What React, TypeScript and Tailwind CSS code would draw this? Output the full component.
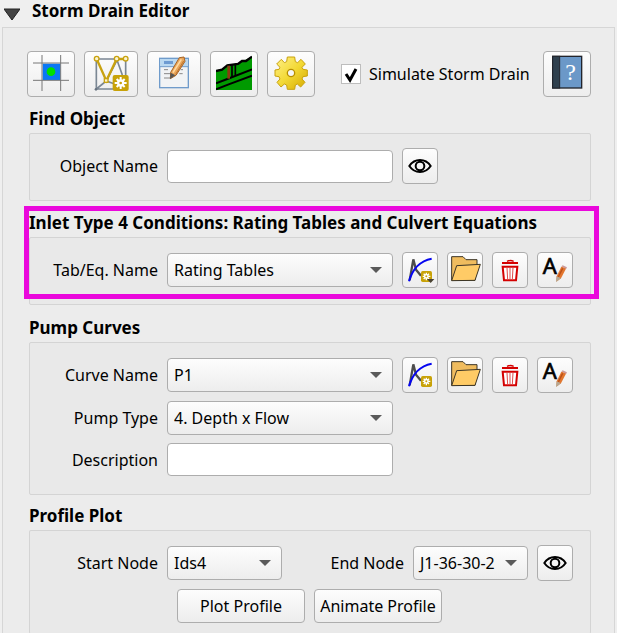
import type { ReactNode } from "react";

function GridPointIcon() {
  return (
    <svg className="h-9 w-9" viewBox="99 165 108 108" aria-hidden="true">
      <rect x="128" y="191" width="53" height="49" fill="#0a78f5" />
      <path d="M99 189H207M99 241H207M126 165V273M182 165V273" stroke="#777" strokeWidth="3" />
      <circle cx="153" cy="215" r="13" fill="#00e000" />
    </svg>
  );
}

function MeshIcon() {
  return (
    <svg className="h-9 w-9" viewBox="280 165 108 108" fill="none" aria-hidden="true">
      <path d="M290 177H378V230M290 177V267H345M290 267L320 243L352 180L368 225M290 180V267M320 243L345 252" stroke="#7b8794" strokeWidth="5" />
      <path d="M291 177L320 242L351 177H377" stroke="#c8a210" strokeWidth="7" />
      <g fill="#fbf3cf" stroke="#c8a210" strokeWidth="4">
        <circle cx="291" cy="176" r="7" />
        <circle cx="351" cy="176" r="7" />
        <circle cx="378" cy="176" r="7" />
        <rect x="314" y="236" width="11" height="11" />
      </g>
      <circle cx="289" cy="268" r="4" fill="#67727f" />
      <rect x="339" y="225" width="48" height="48" rx="6" fill="#c8a208" />
      <path d="M363 231V267M345 249H381M351 237L375 261M375 237L351 261" stroke="#fff" strokeWidth="6" />
      <circle cx="363" cy="249" r="11" fill="#fff" />
      <circle cx="363" cy="249" r="4" fill="#c8a208" />
    </svg>
  );
}

function FormPencilIcon() {
  return (
    <svg className="h-9 w-9" viewBox="468 165 108 108" fill="none" aria-hidden="true">
      <rect x="479" y="175" width="86" height="88" fill="#f1f3f5" stroke="#6f9bcb" strokeWidth="4" />
      <rect x="481" y="177" width="82" height="22" fill="#b9d8f1" />
      <path d="M480 200H565" stroke="#6f9bcb" strokeWidth="3" />
      <rect x="492" y="183" width="27" height="9" fill="#6d9bd2" />
      <path d="M492 209H504M492 221H514M492 234H512M542 209H549M538 221H548" stroke="#888" strokeWidth="3" />
      <path d="M538 173L552 171L555 184L528 226L511 236L512 217Z" fill="#e9a65b" stroke="#a96322" strokeWidth="3" />
      <path d="M544 178L519 218" stroke="#ffd9a0" strokeWidth="5" />
      <path d="M551 183L527 223" stroke="#bd7430" strokeWidth="3" />
      <path d="M512 218L526 226L510 237Z" fill="#555" />
    </svg>
  );
}

function ProfileIcon() {
  return (
    <svg className="h-9 w-9" viewBox="228 48 108 108" fill="none" aria-hidden="true">
      <path d="M228 94L248 90L266 77L296 73L320 61L336 52V153H228Z" fill="#009a00" />
      <path d="M228 96L246 92L262 79L294 75L306 66H318L336 53" stroke="#000" strokeWidth="7" />
      <path d="M228 133L262 120L336 91M228 151L266 136L336 110" stroke="#000" strokeWidth="6" />
      <path d="M276 78V116M286 76V110" stroke="#000" strokeWidth="5" />
      <path d="M266 80V119" stroke="#8d3a12" strokeWidth="8" />
    </svg>
  );
}

function GearIcon() {
  return (
    <svg className="h-9 w-9" viewBox="400 46 108 108" aria-hidden="true">
      <defs>
        <linearGradient id="gold" x1="0" y1="0" x2="1" y2="1">
          <stop offset="0" stopColor="#fff08a" />
          <stop offset="0.5" stopColor="#f3d935" />
          <stop offset="1" stopColor="#d5a900" />
        </linearGradient>
      </defs>
      <path
        d="M443 52H465L467 66L474 69L484 59L497 73L487 83L490 89L503 91V109L490 111L487 118L496 128L483 142L473 133L467 136L465 149H443L441 136L434 133L424 142L412 128L421 118L418 111L406 109V91L418 89L421 83L411 73L425 59L434 69L441 66Z"
        fill="url(#gold)"
        stroke="#c9a20c"
        strokeWidth="3"
        strokeLinejoin="round"
      />
      <circle cx="454" cy="100" r="11" fill="#f6f6f6" stroke="#b89000" strokeWidth="4" />
    </svg>
  );
}

function HelpBookIcon() {
  return (
    <svg className="h-9 w-9" viewBox="657 46 108 108" aria-hidden="true">
      <rect x="668" y="50" width="87" height="95" fill="#6b98c8" stroke="#22242c" strokeWidth="4" />
      <rect x="668" y="50" width="21" height="95" fill="#2f404e" stroke="#22242c" strokeWidth="3" />
      <text x="722" y="121" textAnchor="middle" fontSize="72" fill="#fff" fontFamily="'Liberation Serif', serif">?</text>
    </svg>
  );
}

function EyeIcon() {
  return (
    <svg className="h-6 w-6" viewBox="324 69 72 72" fill="none" stroke="#000" aria-hidden="true">
      <path d="M328 105C344 81 376 81 392 105C376 129 344 129 328 105Z" strokeWidth="6" />
      <circle cx="360" cy="105" r="13" strokeWidth="6" />
    </svg>
  );
}

function CurveIcon({ menu = false }: { menu?: boolean }) {
  return (
    <svg className="h-[30px] w-[30px] overflow-visible" viewBox="135 90 90 90" fill="none" aria-hidden="true">
      <path d="M149 166L160 103L168 134L183 152" stroke="#4c4c4c" strokeWidth="7" />
      <path d="M147 169C157 133 181 107 215 101" stroke="#0505f0" strokeWidth="6" />
      <rect x="183" y="138" width="33" height="33" rx="5" fill="#c8a208" />
      <path d="M199 143V166M188 154H211M191 146L207 162M207 146L191 162" stroke="#fff" strokeWidth="4" />
      <circle cx="199" cy="154" r="7" fill="#fff" />
      <circle cx="199" cy="154" r="3" fill="#c8a208" />
      {menu && <path d="M201 162H223L212 174Z" fill="#4a4334" />}
    </svg>
  );
}

function FolderIcon() {
  return (
    <svg className="h-[30px] w-[30px] overflow-visible" viewBox="270 90 90 90" strokeLinejoin="round" stroke="#3c3526" strokeWidth="3" aria-hidden="true">
      <path d="M275 166V95H309L318 104H351V121L345 166Z" fill="#f0bc5e" />
      <path d="M275 167L290 122L361 118L345 166Z" fill="#ffcb66" />
    </svg>
  );
}

function TrashIcon() {
  return (
    <svg className="h-[30px] w-[30px]" viewBox="405 90 90 90" fill="none" stroke="#d40000" aria-hidden="true">
      <path d="M441 109Q451 104 461 109" strokeWidth="4" />
      <path d="M426 114H474" strokeWidth="6" />
      <path d="M428 125H472L468 166H432Z" fill="#fff" strokeWidth="6" />
      <path d="M441 128L443 164M450 128V164M459 128L457 164" strokeWidth="3" stroke="#e04a4a" />
    </svg>
  );
}

function RenameIcon() {
  return (
    <svg className="h-[30px] w-[30px] overflow-visible" viewBox="540 90 90 90" aria-hidden="true">
      <text x="569" y="148" textAnchor="middle" fontSize="66" fill="#000" stroke="#000" strokeWidth="2" fontFamily="'Noto Sans', sans-serif">A</text>
      <path d="M590 154L604 125L619 129L603 160L589 170Z" fill="#e2762e" />
      <path d="M608 130L595 156" stroke="#b9501a" strokeWidth="4" />
      <path d="M604 124L608 121L621 127L618 132Z" fill="#c99" />
      <path d="M590 154L603 160L588 171Z" fill="#b5a894" />
    </svg>
  );
}

const face = "rounded border border-[#adadad] bg-linear-to-b from-[#fdfdfd] to-[#ededed]";

function ToolButton({ label, wide = false, children }: { label: string; wide?: boolean; children: ReactNode }) {
  return (
    <button type="button" aria-label={label} className={`flex h-[46px] shrink-0 items-center justify-center pb-0.5 ${wide ? "w-[54px]" : "w-12"} ${face}`}>
      {children}
    </button>
  );
}

function IconButton({ label, children }: { label: string; children: ReactNode }) {
  return (
    <button type="button" aria-label={label} className={`flex h-9 w-9 items-center justify-center ${face}`}>
      {children}
    </button>
  );
}

function Combo({ id, options }: { id: string; options: string[] }) {
  return (
    <div className="relative min-w-0">
      <select id={id} className={`block h-[34px] w-full appearance-none pr-8 pl-1 indent-0.5 leading-6 ${face}`}>
        {options.map((o) => (
          <option key={o}>{o}</option>
        ))}
      </select>
      <svg className="pointer-events-none absolute top-3.5 right-[11px] h-1.5 w-3" viewBox="0 0 12 6" aria-hidden="true">
        <path d="M0 0H12L6 6Z" fill="#5a5a5a" />
      </svg>
    </div>
  );
}

function TextBox({ id }: { id: string }) {
  return <input id={id} type="text" className="h-[33px] w-full min-w-0 rounded border border-[#adadad] bg-white px-1.5 leading-6" />;
}

function FieldLabel({ htmlFor, children }: { htmlFor: string; children: ReactNode }) {
  return (
    <label htmlFor={htmlFor} className="text-right whitespace-nowrap">
      {children}
    </label>
  );
}

const frame = "border border-[#d4d4d4] bg-[#e9e9e9] pr-[17px] rounded-xs";
const fields = "grid grid-cols-[128px_1fr_36px_36px_36px_36px] items-center gap-x-[9px]";

function Group({ title, highlighted = false, children }: { title: string; highlighted?: boolean; children: ReactNode }) {
  return (
    <section className="relative">
      <h2 className="h-[23px] text-[17px] font-bold whitespace-nowrap">{title}</h2>
      {children}
      {highlighted && <div className="pointer-events-none absolute -top-2 -right-2 bottom-1.5 -left-[5px] border-5 border-[#ea08dc]" />}
    </section>
  );
}

function CurveActions({ menu = false }: { menu?: boolean }) {
  return (
    <>
      <IconButton label="New"><CurveIcon menu={menu} /></IconButton>
      <IconButton label="Open"><FolderIcon /></IconButton>
      <IconButton label="Delete"><TrashIcon /></IconButton>
      <IconButton label="Rename"><RenameIcon /></IconButton>
    </>
  );
}

export default function App() {
  return (
    <main className="bg-[#efefef] px-0.5 font-['Noto_Sans',sans-serif] text-[16px] leading-[18px] text-black">
      <header className="flex h-[27px] items-start gap-3 pt-0.5">
        <svg className="mt-1.5 ml-0.5 h-3 w-4" viewBox="0 0 16 12" aria-hidden="true">
          <path d="M0 1H16L8 12Z" fill="#444" stroke="#222" strokeWidth="1" />
        </svg>
        <h1 className="text-[17px] font-bold">Storm Drain Editor</h1>
      </header>

      <div className="border border-b-0 border-[#d6d6d6] bg-[#ececec] pr-[23px] pl-[26px]">
        <div className="-ml-0.5 flex items-center gap-[9px] pt-[23px] pb-[13px]">
          <ToolButton label="Grid point"><GridPointIcon /></ToolButton>
          <ToolButton label="Create layers" wide><MeshIcon /></ToolButton>
          <ToolButton label="Edit attributes" wide><FormPencilIcon /></ToolButton>
          <ToolButton label="Profile"><ProfileIcon /></ToolButton>
          <ToolButton label="Settings"><GearIcon /></ToolButton>
          <div className="ml-[17px] flex flex-1 items-center gap-2">
            <span className="relative h-5 w-5 shrink-0">
              <input id="simulate" type="checkbox" defaultChecked className="peer block h-5 w-5 appearance-none border border-[#bdbdbd] bg-white" />
              <svg className="pointer-events-none absolute inset-0 hidden h-5 w-5 peer-checked:block" viewBox="0 0 20 20" fill="none" aria-hidden="true">
                <path d="M5 10L9 16L15 5" stroke="#000" strokeWidth="3" />
              </svg>
            </span>
            <label htmlFor="simulate" className="whitespace-nowrap">Simulate Storm Drain</label>
          </div>
          <ToolButton label="Help"><HelpBookIcon /></ToolButton>
        </div>

        <Group title="Find Object">
          <div className={`${frame} ${fields} pt-[14px] pb-4`}>
            <FieldLabel htmlFor="object">Object Name</FieldLabel>
            <TextBox id="object" />
            <IconButton label="Find"><EyeIcon /></IconButton>
          </div>
        </Group>

        <div className="pt-[13px] pb-[14px]">
          <Group title="Inlet Type 4 Conditions: Rating Tables and Culvert Equations" highlighted>
            <div className={`${frame} ${fields} pt-[14px] pb-4`}>
              <FieldLabel htmlFor="table">Tab/Eq. Name</FieldLabel>
              <Combo id="table" options={["Rating Tables"]} />
              <CurveActions menu />
            </div>
          </Group>
        </div>

        <Group title="Pump Curves">
          <div className={`${frame} ${fields} gap-y-2 pt-[14px] pb-[18px]`}>
            <FieldLabel htmlFor="curve">Curve Name</FieldLabel>
            <Combo id="curve" options={["P1"]} />
            <CurveActions />
            <div className="contents">
              <FieldLabel htmlFor="pump">Pump Type</FieldLabel>
              <Combo id="pump" options={["4. Depth x Flow"]} />
              <span className="col-span-4" />
            </div>
            <FieldLabel htmlFor="description">Description</FieldLabel>
            <TextBox id="description" />
          </div>
        </Group>

        <div className="pt-3">
          <Group title="Profile Plot">
            <div className={`${frame} border-b-0 pt-[14px] pb-[11px]`}>
              <div className="grid grid-cols-[128px_1fr_113px_1fr_36px] items-center gap-x-[9px]">
                <FieldLabel htmlFor="start">Start Node</FieldLabel>
                <Combo id="start" options={["Ids4"]} />
                <FieldLabel htmlFor="end">End Node</FieldLabel>
                <Combo id="end" options={["J1-36-30-27"]} />
                <IconButton label="Show nodes"><EyeIcon /></IconButton>
              </div>
              <div className="flex justify-center gap-[9px] pt-2 pl-4">
                <button type="button" className={`h-[34px] w-32 ${face}`}>Plot Profile</button>
                <button type="button" className={`h-[34px] w-32 ${face}`}>Animate Profile</button>
              </div>
            </div>
          </Group>
        </div>
      </div>
    </main>
  );
}
